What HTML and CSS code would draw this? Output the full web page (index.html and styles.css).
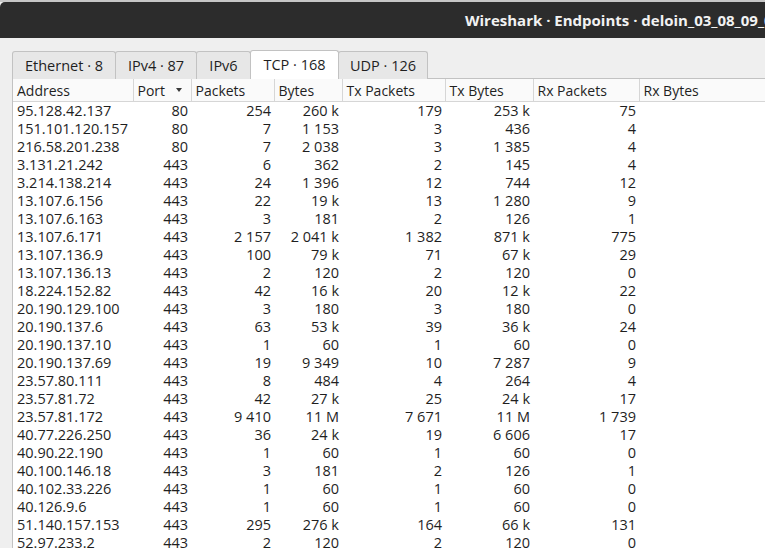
FILE: index.html
```html
<!DOCTYPE html>
<html lang="en">
<head>
  <meta charset="UTF-8">
  <title>Wireshark · Endpoints</title>
  <link rel="stylesheet" href="styles.css">
</head>
<body>
  <div class="top-strip"></div>
  <div class="titlebar">Wireshark · Endpoints · deloin_03_08_09_00</div>

  <div class="content">
    <div class="tabs">
      <div class="tab tab-eth">Ethernet · 8</div>
      <div class="tab tab-ipv4">IPv4 · 87</div>
      <div class="tab tab-ipv6">IPv6</div>
      <div class="tab tab-tcp active">TCP · 168</div>
      <div class="tab tab-udp">UDP · 126</div>
    </div>

    <div class="panel">
      <table class="endpoints">
        <colgroup>
          <col class="c-addr"><col class="c-port"><col class="c-pk"><col class="c-by">
          <col class="c-txp"><col class="c-txb"><col class="c-rxp"><col class="c-rxb">
        </colgroup>
        <thead>
          <tr>
            <th>Address</th>
            <th class="sorted">Port</th>
            <th>Packets</th>
            <th>Bytes</th>
            <th>Tx Packets</th>
            <th>Tx Bytes</th>
            <th>Rx Packets</th>
            <th>Rx Bytes</th>
          </tr>
        </thead>
        <tbody id="rows"></tbody>
      </table>
    </div>
  </div>

  <script>
    // address, port, packets, bytes, tx packets, tx bytes, rx packets
    const endpoints = [
      ['95.128.42.137', '80', '254', '260 k', '179', '253 k', '75'],
      ['151.101.120.157', '80', '7', '1 153', '3', '436', '4'],
      ['216.58.201.238', '80', '7', '2 038', '3', '1 385', '4'],
      ['3.131.21.242', '443', '6', '362', '2', '145', '4'],
      ['3.214.138.214', '443', '24', '1 396', '12', '744', '12'],
      ['13.107.6.156', '443', '22', '19 k', '13', '1 280', '9'],
      ['13.107.6.163', '443', '3', '181', '2', '126', '1'],
      ['13.107.6.171', '443', '2 157', '2 041 k', '1 382', '871 k', '775'],
      ['13.107.136.9', '443', '100', '79 k', '71', '67 k', '29'],
      ['13.107.136.13', '443', '2', '120', '2', '120', '0'],
      ['18.224.152.82', '443', '42', '16 k', '20', '12 k', '22'],
      ['20.190.129.100', '443', '3', '180', '3', '180', '0'],
      ['20.190.137.6', '443', '63', '53 k', '39', '36 k', '24'],
      ['20.190.137.10', '443', '1', '60', '1', '60', '0'],
      ['20.190.137.69', '443', '19', '9 349', '10', '7 287', '9'],
      ['23.57.80.111', '443', '8', '484', '4', '264', '4'],
      ['23.57.81.72', '443', '42', '27 k', '25', '24 k', '17'],
      ['23.57.81.172', '443', '9 410', '11 M', '7 671', '11 M', '1 739'],
      ['40.77.226.250', '443', '36', '24 k', '19', '6 606', '17'],
      ['40.90.22.190', '443', '1', '60', '1', '60', '0'],
      ['40.100.146.18', '443', '3', '181', '2', '126', '1'],
      ['40.102.33.226', '443', '1', '60', '1', '60', '0'],
      ['40.126.9.6', '443', '1', '60', '1', '60', '0'],
      ['51.140.157.153', '443', '295', '276 k', '164', '66 k', '131'],
      ['52.97.233.2', '443', '2', '120', '2', '120', '0']
    ];

    const tbody = document.getElementById('rows');
    endpoints.forEach(row => {
      const tr = document.createElement('tr');
      row.concat(['']).forEach((value, i) => {
        const td = document.createElement('td');
        td.className = i === 0 ? 'addr' : 'num';
        // keep grouped digits together
        td.textContent = value.replace(/ /g, '\u00A0');
        tr.appendChild(td);
      });
      tbody.appendChild(tr);
    });
  </script>
</body>
</html>
```

FILE: styles.css
```css
body {
  margin: 0;
  width: 765px;
  height: 548px;
  overflow: hidden;
  font-family: "Open Sans", "DejaVu Sans", sans-serif;
  font-size: 14px;
  color: #1f1f1f;
  background-color: #efefef;
}
.top-strip {
  height: 2px;
  background-color: #c6c6c6;
}
.titlebar {
  height: 36px;
  background-color: #2c2c2c;
  border-radius: 5px 0 0 0;
  color: #f2f2f2;
  font-weight: bold;
  font-size: 15px;
  display: flex;
  align-items: center;
  padding-left: 465px;
  white-space: nowrap;
}
.content {
  padding: 12px 0 0 12px;
}
.tabs {
  display: flex;
  align-items: flex-end;
  height: 29px;
  position: relative;
  z-index: 1;
}
.tab {
  box-sizing: border-box;
  height: 28px;
  border: 1px solid #c2c2c2;
  border-bottom: none;
  border-radius: 3px 3px 0 0;
  background-color: #e7e7e7;
  display: flex;
  align-items: center;
  justify-content: center;
  margin-right: -1px;
  padding-bottom: 1px;
  font-size: 14.5px;
  white-space: nowrap;
}
.tab.active {
  height: 29px;
  background-color: #fff;
  padding-bottom: 2px;
}
.tab-eth { width: 104px; }
.tab-ipv4 { width: 82px; }
.tab-ipv6 { width: 55px; }
.tab-tcp { width: 89px; }
.tab-udp { width: 90px; }
.panel {
  margin-top: -1px;
  height: 480px;
  background-color: #fff;
  border: 1px solid #c2c2c2;
  border-right: none;
}
.endpoints {
  table-layout: fixed;
  border-collapse: collapse;
  width: 756px;
}
.c-addr { width: 120px; }
.c-port { width: 58px; }
.c-pk { width: 83px; }
.c-by { width: 68px; }
.c-txp { width: 103px; }
.c-txb { width: 88px; }
.c-rxp { width: 106px; }
.c-rxb { width: 130px; }
.endpoints th {
  height: 22px;
  padding: 0 4px;
  font-weight: normal;
  text-align: left;
  background-color: #fafafa;
  border-right: 1px solid #d6d6d6;
  border-bottom: 1px solid #d6d6d6;
  white-space: nowrap;
  overflow: hidden;
}
.endpoints th.sorted {
  position: relative;
}
.endpoints th.sorted::after {
  content: "";
  position: absolute;
  right: 9px;
  top: 9px;
  border-left: 3.5px solid transparent;
  border-right: 3.5px solid transparent;
  border-top: 4px solid #3a3a3a;
}
.endpoints td {
  height: 18px;
  line-height: 18px;
  padding: 0 3px 0 4px;
  font-size: 14.5px;
  white-space: nowrap;
  overflow: hidden;
}
.endpoints td.num {
  text-align: right;
}
```
